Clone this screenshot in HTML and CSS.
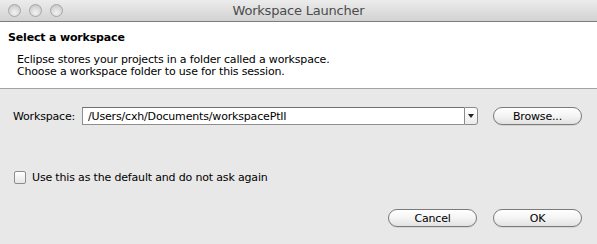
FILE: index.html
```html
<!DOCTYPE html>
<html lang="en">
<head>
  <meta charset="UTF-8">
  <title>Workspace Launcher</title>
  <link rel="stylesheet" href="styles.css">
</head>
<body>
  <div class="window">
    <div class="titlebar">
      <div class="lights">
        <span class="light"></span>
        <span class="light"></span>
        <span class="light"></span>
      </div>
      <div class="title">Workspace Launcher</div>
    </div>

    <div class="header">
      <h1 class="header__title">Select a workspace</h1>
      <p class="header__text">Eclipse stores your projects in a folder called a workspace.<br>Choose a workspace folder to use for this session.</p>
    </div>

    <div class="content">
      <div class="row">
        <label class="row__label" for="ws">Workspace:</label>
        <div class="combo">
          <input id="ws" class="combo__input" type="text" value="/Users/cxh/Documents/workspacePtII">
          <span class="combo__arrow"></span>
        </div>
        <button class="btn">Browse...</button>
      </div>

      <label class="check">
        <span class="check__box"></span>
        Use this as the default and do not ask again
      </label>

      <div class="actions">
        <button class="btn">Cancel</button>
        <button class="btn">OK</button>
      </div>
    </div>
  </div>
</body>
</html>
```

FILE: styles.css
```css
html {
  box-sizing: border-box;
  background: #e8e8e8;
}

*, *:before, *:after {
  box-sizing: inherit;
}

body {
  margin: 0;
  font-family: "DejaVu Sans", "Liberation Sans", sans-serif;
  font-size: 11px;
  letter-spacing: -0.17px;
  color: #000;
}

.window {
  width: 597px;
  height: 244px;
  display: flex;
  flex-direction: column;
  background: #e8e8e8;
}

.titlebar {
  height: 22px;
  display: flex;
  align-items: center;
  background: linear-gradient(#ececec, #d2d2d2);
  border-bottom: 1px solid #7d7d7d;
  position: relative;
}

.lights {
  display: flex;
  gap: 8px;
  padding-left: 8px;
  margin-top: -1px;
}

.light {
  width: 13px;
  height: 13px;
  border-radius: 50%;
  border: 1px solid #a6a6a6;
  background: radial-gradient(circle at 50% 70%, #f2f2f2 0%, #d8d8d8 55%, #bcbcbc 100%);
}

.title {
  position: absolute;
  left: 0;
  right: 0;
  top: 3px;
  text-align: center;
  font-size: 13px;
  letter-spacing: -0.2px;
  color: #4c4c4c;
}

.header {
  height: 67px;
  background: #fff;
  border-bottom: 1px solid #a3a3a3;
  padding: 9px 8px 0;
}

.header__title {
  margin: 0;
  font-size: 11px;
  font-weight: bold;
  line-height: 14px;
}

.header__text {
  margin: 9px 0 0 9px;
  line-height: 12px;
}

.content {
  flex: 1;
  padding: 18px 15px 17px 13px;
  display: flex;
  flex-direction: column;
}

.row {
  display: flex;
  align-items: center;
  height: 18px;
}

.row__label {
  width: 69px;
}

.combo {
  width: 396px;
  height: 18px;
  display: flex;
  margin-right: 15px;
}

.combo__input {
  flex: 1;
  min-width: 0;
  height: 18px;
  border: 1px solid #8e8e8e;
  border-top-color: #6f6f6f;
  border-right: 0;
  padding: 0 5px;
  font-family: inherit;
  font-size: 11px;
  letter-spacing: inherit;
  outline: 0;
}

.combo__arrow {
  width: 14px;
  height: 18px;
  border: 1px solid #8a8a8a;
  border-radius: 0 3px 3px 0;
  background: linear-gradient(#ffffff, #ececec);
  position: relative;
}

.combo__arrow:after {
  content: "";
  position: absolute;
  left: 3px;
  top: 6px;
  border-left: 3px solid transparent;
  border-right: 3px solid transparent;
  border-top: 4px solid #222;
}

.btn {
  width: 89px;
  height: 18px;
  padding: 0;
  border: 1px solid #7a7a7a;
  border-radius: 9px;
  background: linear-gradient(#ffffff 0%, #f4f4f4 50%, #e2e2e2 100%);
  box-shadow: 0 1px 0 rgba(0,0,0,0.08);
  font-family: inherit;
  font-size: 11px;
  letter-spacing: inherit;
  color: #000;
}

.check {
  display: flex;
  align-items: center;
  margin-top: 46px;
  height: 13px;
  padding-left: 1px;
}

.check__box {
  width: 12px;
  height: 13px;
  margin-right: 6px;
  border: 1px solid #8c8c8c;
  border-radius: 2px;
  background: linear-gradient(#ffffff, #e6e6e6);
}

.actions {
  margin-top: auto;
  display: flex;
  justify-content: flex-end;
  gap: 16px;
}
```
